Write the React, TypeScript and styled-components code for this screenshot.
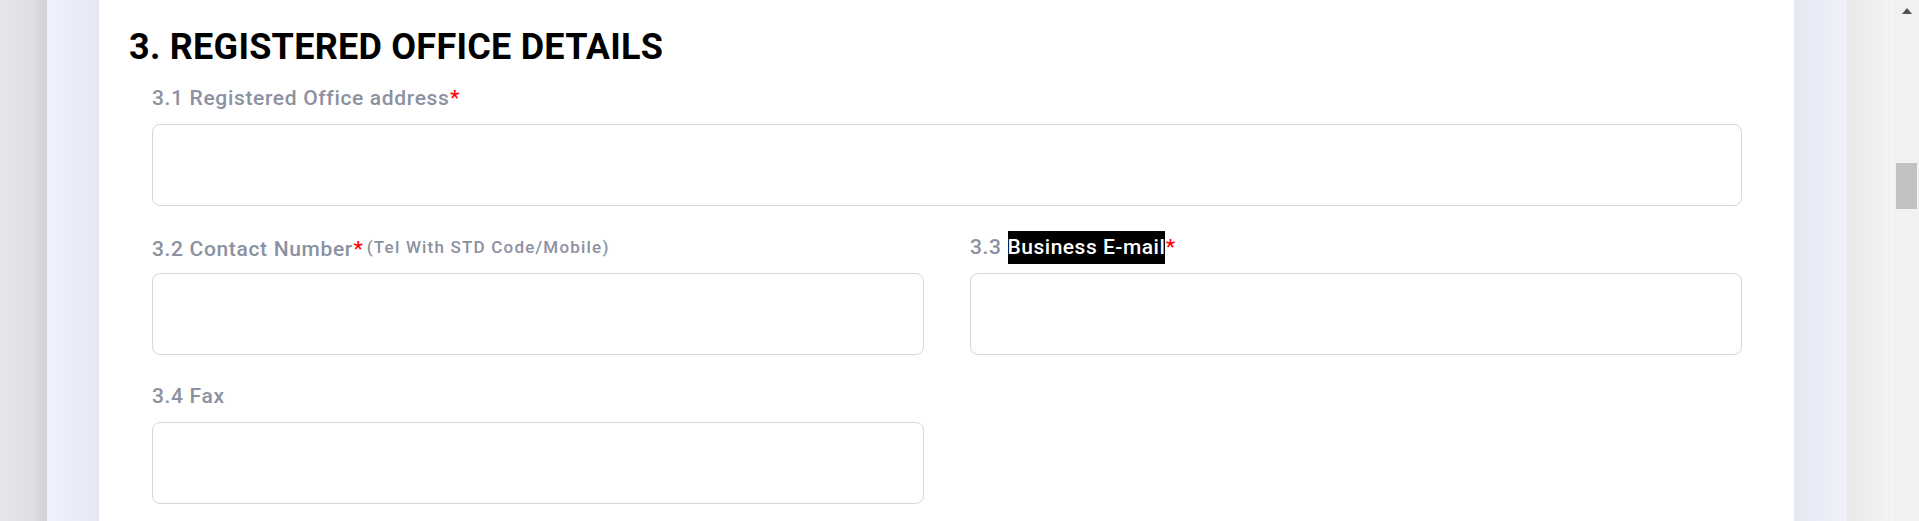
import React from "react";
import styled, { createGlobalStyle } from "styled-components";

const GlobalStyle = createGlobalStyle`
  html, body {
    margin: 0;
    padding: 0;
    height: 100%;
    overflow: hidden;
    background: #ffffff;
  }
  body {
    font-family: Roboto, "Noto Sans", "Liberation Sans", sans-serif;
  }
  #root {
    height: 521px;
  }
`;

const Page = styled.div`
  display: flex;
  width: 100%;
  height: 521px;
`;

const LeftShade = styled.div`
  flex: 0 0 47px;
  background: linear-gradient(to right, #e7e7ea 0%, #dedfe3 70%, #d0d1d8 100%);
`;

const RightShade = styled.div`
  flex: 0 0 47px;
  background: linear-gradient(to right, #e8e8e9 0%, #f0f0f1 70%, #f4f4f5 100%);
`;

const Backdrop = styled.div`
  flex: 1;
  display: flex;
  padding: 0 53px 0 52px;
  background: linear-gradient(
    to right,
    #eff2fc 0px,
    #e6e9f3 52px,
    #e6e9f3 calc(100% - 53px),
    #eef1fa 100%
  );
`;

const Card = styled.section`
  flex: 1;
  background: #ffffff;
  padding: 26px 52px 0 30px;
  box-sizing: border-box;
`;

const Heading = styled.h2`
  margin: 0 0 14.3px 0;
  font-family: Roboto, "Noto Sans", sans-serif;
  font-weight: 700;
  font-size: 36px;
  line-height: 42px;
  color: #000000;
  letter-spacing: 0.25px;
`;

const FormGrid = styled.div`
  display: grid;
  grid-template-columns: 1fr 1fr;
  column-gap: 46px;
  row-gap: 24.7px;
  margin-left: 23px;
`;

const Field = styled.div<{ $wide?: boolean }>`
  grid-column: ${(p) => (p.$wide ? "1 / span 2" : "auto")};
  display: flex;
  flex-direction: column;
`;

const Label = styled.label`
  display: block;
  height: 33px;
  line-height: 33px;
  margin-bottom: 9px;
  font-family: Roboto, "Noto Sans", sans-serif;
  font-weight: 500;
  font-size: 21px;
  letter-spacing: 0.66px;
  color: #8c91a1;
  white-space: nowrap;
`;

const Required = styled.span`
  color: #ff0000;
  letter-spacing: 0;
  margin-left: 0.5px;
`;

const Hint = styled.span`
  font-size: 17px;
  letter-spacing: 1.2px;
  vertical-align: 3px;
  margin-left: 4px;
`;

const Selected = styled.span`
  display: inline-block;
  background: #000000;
  color: #ffffff;
  line-height: 33px;
  letter-spacing: 0.5px;
`;

const Input = styled.input`
  display: block;
  width: 100%;
  height: 82px;
  box-sizing: border-box;
  border: 1px solid #d6d6e2;
  border-radius: 8px;
  background: #ffffff;
  outline: none;
  font-family: Roboto, sans-serif;
  font-size: 18px;
  padding: 0 16px;
`;

const Scrollbar = styled.div`
  flex: 0 0 25px;
  background: #f1f1f1;
  display: flex;
  flex-direction: column;
  align-items: center;
`;

const ArrowUp = styled.div`
  width: 0;
  height: 0;
  margin-top: 8px;
  border-left: 5.5px solid transparent;
  border-right: 5.5px solid transparent;
  border-bottom: 6px solid #505050;
`;

const Thumb = styled.div`
  width: 21px;
  height: 46px;
  margin-top: 149px;
  background: #c1c1c1;
`;

export default function App() {
  return (
    <>
      <GlobalStyle />
      <Page>
        <LeftShade />
        <Backdrop>
          <Card>
            <Heading>3. REGISTERED OFFICE DETAILS</Heading>
            <FormGrid>
              <Field $wide>
                <Label>
                  3.1 Registered Office address<Required>*</Required>
                </Label>
                <Input type="text" />
              </Field>
              <Field>
                <Label>
                  3.2 Contact Number<Required>*</Required>
                  <Hint>(Tel With STD Code/Mobile)</Hint>
                </Label>
                <Input type="text" />
              </Field>
              <Field>
                <Label>
                  3.3 <Selected>Business E-mail</Selected>
                  <Required>*</Required>
                </Label>
                <Input type="email" />
              </Field>
              <Field>
                <Label>3.4 Fax</Label>
                <Input type="text" />
              </Field>
            </FormGrid>
          </Card>
        </Backdrop>
        <RightShade />
        <Scrollbar>
          <ArrowUp />
          <Thumb />
        </Scrollbar>
      </Page>
    </>
  );
}
